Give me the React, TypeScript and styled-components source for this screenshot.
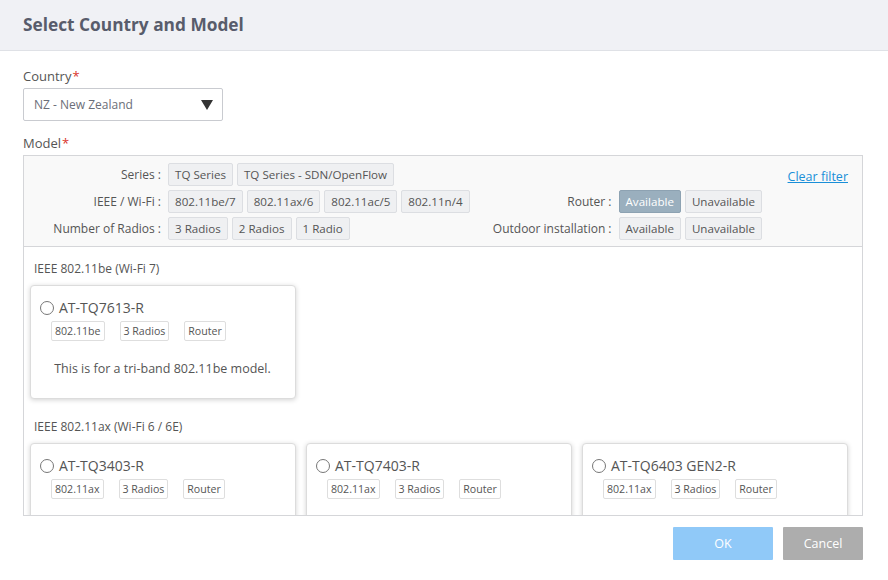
import React from "react";
import styled, { createGlobalStyle } from "styled-components";

const GlobalStyle = createGlobalStyle`
  html, body {
    margin: 0;
    padding: 0;
    background: #ffffff;
  }
  body {
    font-family: "Open Sans", "Noto Sans", sans-serif;
    color: #555;
  }
  * {
    box-sizing: border-box;
  }
`;

type Model = {
  name: string;
  tags: string[];
  description?: string;
};

type Group = {
  title: string;
  models: Model[];
};

const groups: Group[] = [
  {
    title: "IEEE 802.11be (Wi-Fi 7)",
    models: [
      {
        name: "AT-TQ7613-R",
        tags: ["802.11be", "3 Radios", "Router"],
        description: "This is for a tri-band 802.11be model.",
      },
    ],
  },
  {
    title: "IEEE 802.11ax (Wi-Fi 6 / 6E)",
    models: [
      { name: "AT-TQ3403-R", tags: ["802.11ax", "3 Radios", "Router"] },
      { name: "AT-TQ7403-R", tags: ["802.11ax", "3 Radios", "Router"] },
      { name: "AT-TQ6403 GEN2-R", tags: ["802.11ax", "3 Radios", "Router"] },
    ],
  },
];

const App: React.FC = () => {
  return (
    <>
      <GlobalStyle />
      <Dialog>
        <Header>
          <Title>Select Country and Model</Title>
        </Header>
        <Body>
          <Label>
            Country<Required>*</Required>
          </Label>
          <Select>
            <span>NZ - New Zealand</span>
            <Caret />
          </Select>
          <Label $top={13}>
            Model<Required>*</Required>
          </Label>
          <ModelBox>
            <Filters>
              <FilterLabel>Series :</FilterLabel>
              <Chips>
                <Chip>TQ Series</Chip>
                <Chip>TQ Series - SDN/OpenFlow</Chip>
              </Chips>
              <span />
              <span />
              <ClearCell>
                <ClearLink href="#">Clear filter</ClearLink>
              </ClearCell>

              <FilterLabel>IEEE / Wi-Fi :</FilterLabel>
              <Chips>
                <Chip>802.11be/7</Chip>
                <Chip>802.11ax/6</Chip>
                <Chip>802.11ac/5</Chip>
                <Chip>802.11n/4</Chip>
              </Chips>
              <FilterLabel>Router :</FilterLabel>
              <Chips>
                <Chip $active>Available</Chip>
                <Chip>Unavailable</Chip>
              </Chips>
              <span />

              <FilterLabel>Number of Radios :</FilterLabel>
              <Chips>
                <Chip>3 Radios</Chip>
                <Chip>2 Radios</Chip>
                <Chip>1 Radio</Chip>
              </Chips>
              <FilterLabel>Outdoor installation :</FilterLabel>
              <Chips>
                <Chip>Available</Chip>
                <Chip>Unavailable</Chip>
              </Chips>
              <span />
            </Filters>
            <List>
              {groups.map((group) => (
                <GroupBlock key={group.title}>
                  <GroupTitle>{group.title}</GroupTitle>
                  <Cards>
                    {group.models.map((model) => (
                      <Card key={model.name}>
                        <CardHead>
                          <Radio />
                          <ModelName>{model.name}</ModelName>
                        </CardHead>
                        <Tags>
                          {model.tags.map((tag) => (
                            <Tag key={tag}>{tag}</Tag>
                          ))}
                        </Tags>
                        {model.description && (
                          <Description>{model.description}</Description>
                        )}
                      </Card>
                    ))}
                  </Cards>
                </GroupBlock>
              ))}
            </List>
          </ModelBox>
        </Body>
        <Footer>
          <Button $variant="ok">OK</Button>
          <Button $variant="cancel">Cancel</Button>
        </Footer>
      </Dialog>
    </>
  );
};

const Dialog = styled.div`
  width: 888px;
  height: 580px;
  display: flex;
  flex-direction: column;
  overflow: hidden;
  background: #fff;
`;

const Header = styled.div`
  height: 51px;
  flex: none;
  display: flex;
  align-items: center;
  padding: 0 23px 2px;
  background: #f0f1f5;
  border-bottom: 1px solid #dfe1e6;
`;

const Title = styled.h1`
  margin: 0;
  font-size: 17.3px;
  font-weight: 700;
  color: #585c6b;
`;

const Body = styled.div`
  padding: 16px 25px 0 23px;
  display: flex;
  flex-direction: column;
`;

const Label = styled.div<{ $top?: number }>`
  margin-top: ${(p) => p.$top || 0}px;
  font-size: 13px;
  line-height: 18px;
  color: #555;
`;

const Required = styled.span`
  color: #d9342b;
  margin-left: 1px;
`;

const Select = styled.div`
  margin-top: 3px;
  width: 200px;
  height: 33px;
  border: 1px solid #c9cbd0;
  border-radius: 2px;
  display: flex;
  align-items: center;
  justify-content: space-between;
  padding: 0 9px 0 10px;
  font-size: 12px;
  color: #6b6e78;
`;

const Caret = styled.span`
  width: 0;
  height: 0;
  border-left: 6px solid transparent;
  border-right: 6px solid transparent;
  border-top: 10px solid #333;
  margin-top: 1px;
`;

const ModelBox = styled.div`
  margin-top: 3px;
  width: 840px;
  height: 361px;
  border: 1px solid #d5d6d9;
  display: flex;
  flex-direction: column;
  overflow: hidden;
`;

const Filters = styled.div`
  flex: none;
  background: #f9f9f9;
  border-bottom: 1px solid #d5d6d9;
  padding: 7px 14px 6px 0;
  display: grid;
  grid-template-columns: 137px 1fr auto auto 79px;
  grid-auto-rows: 23px;
  column-gap: 7px;
  row-gap: 4px;
  align-items: center;
`;

const FilterLabel = styled.div`
  text-align: right;
  font-size: 12px;
  color: #555;
  white-space: nowrap;
`;

const Chips = styled.div`
  display: flex;
  gap: 4px;
  height: 23px;
`;

const Chip = styled.button<{ $active?: boolean }>`
  height: 23px;
  padding: 0 6px;
  font-family: inherit;
  font-size: 11.6px;
  color: ${(p) => (p.$active ? "#ffffff" : "#555")};
  background: ${(p) => (p.$active ? "#9aafbe" : "#eff0f2")};
  border: 1px solid ${(p) => (p.$active ? "#8da2b2" : "#dcdee2")};
  border-radius: 2px;
  white-space: nowrap;
  cursor: pointer;
`;

const ClearCell = styled.div`
  text-align: right;
  align-self: start;
  padding-top: 1px;
`;

const ClearLink = styled.a`
  font-size: 12.5px;
  color: #1a8fd8;
  text-decoration: underline;
`;

const List = styled.div`
  flex: 1;
  overflow: hidden;
  padding: 14px 14px 0 6px;
  background: #fff;
`;

const GroupBlock = styled.div`
  margin-bottom: 20px;
`;

const GroupTitle = styled.div`
  padding-left: 4px;
  font-size: 12px;
  line-height: 16px;
  color: #555;
  margin-bottom: 8px;
`;

const Cards = styled.div`
  display: flex;
  flex-wrap: wrap;
  gap: 10px;
`;

const Card = styled.div`
  width: 266px;
  min-height: 114px;
  border: 1px solid #dcdcdc;
  border-radius: 4px;
  background: #fff;
  box-shadow: 0 1px 5px rgba(0, 0, 0, 0.18);
  padding: 13px 10px 12px 9px;
`;

const CardHead = styled.div`
  display: flex;
  align-items: center;
  gap: 5px;
`;

const Radio = styled.span`
  width: 14px;
  height: 14px;
  border: 1px solid #777;
  border-radius: 50%;
  flex: none;
`;

const ModelName = styled.span`
  font-size: 14px;
  line-height: 18px;
  color: #555;
`;

const Tags = styled.div`
  display: flex;
  gap: 15px;
  margin-top: 4px;
  padding-left: 11px;
`;

const Tag = styled.span`
  height: 20px;
  padding: 0 3px;
  border: 1px solid #dedede;
  border-radius: 2px;
  font-size: 10.6px;
  line-height: 18px;
  color: #555;
  background: #fff;
`;

const Description = styled.div`
  margin-top: 19px;
  text-align: center;
  font-size: 12.5px;
  color: #555;
`;

const Footer = styled.div`
  display: flex;
  justify-content: flex-end;
  gap: 10px;
  padding: 11px 25px 0 0;
`;

const Button = styled.button<{ $variant: "ok" | "cancel" }>`
  width: ${(p) => (p.$variant === "ok" ? 100 : 80)}px;
  height: 33px;
  border: none;
  border-radius: 1px;
  font-family: inherit;
  font-size: 12.5px;
  color: #fff;
  background: ${(p) => (p.$variant === "ok" ? "#90c9f8" : "#adadad")};
  cursor: pointer;
`;

export default App;
